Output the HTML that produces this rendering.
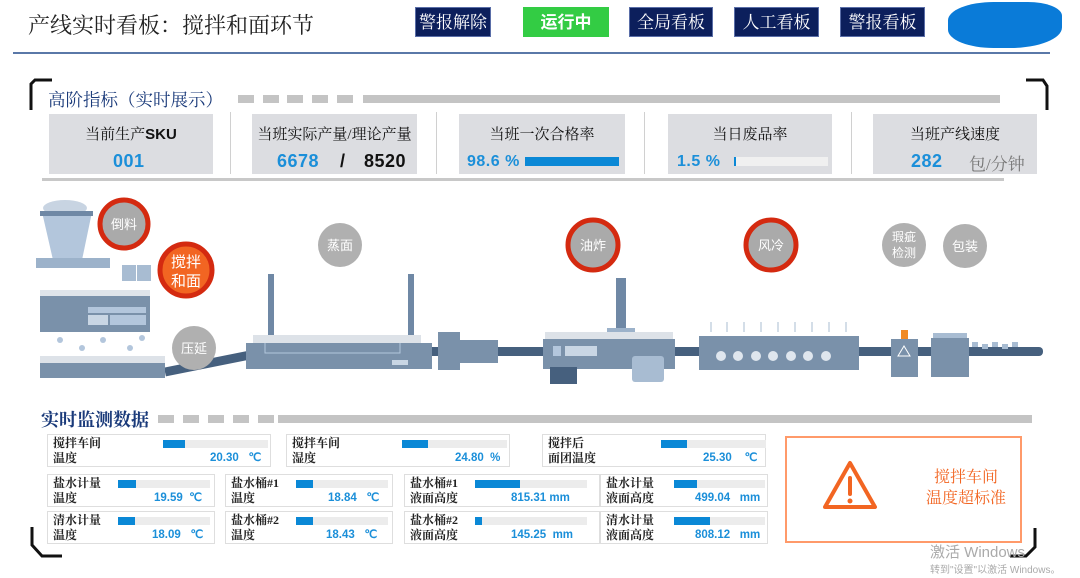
<!DOCTYPE html>
<html><head><meta charset="utf-8"><style>
*{margin:0;padding:0;box-sizing:border-box}
body{width:1080px;height:578px;background:#fff;position:relative;overflow:hidden;font-family:"Liberation Sans","Noto Sans CJK SC",sans-serif}
.a{position:absolute}
.serif{font-family:"Liberation Serif","Noto Serif CJK SC",serif}
.btn{position:absolute;top:7px;height:30px;background:#0c1f5c;color:#fff;font-size:17px;text-align:center;line-height:30px;font-family:"Liberation Serif","Noto Serif CJK SC",serif;border:1px solid #5a6ea8}
.card{position:absolute;top:114px;height:60px;background:#dcdde1}
.card .t{position:absolute;top:9px;width:100%;text-align:center;font-size:15px;color:#111;font-family:"Liberation Serif","Noto Serif CJK SC",serif;white-space:nowrap}
.card .v{position:absolute;top:37px;font-size:18px;font-weight:bold;color:#1b8fd9;letter-spacing:.5px;white-space:nowrap}
.sep{position:absolute;top:112px;width:1px;height:62px;background:#d0d0d0}
.dc{position:absolute;border:1.5px solid #dedede;background:#fff;font-family:"Liberation Serif","Noto Serif CJK SC",serif;font-size:12px;color:#222;font-weight:bold;white-space:nowrap}
.dc .l1{position:absolute;left:5px;top:1px;line-height:14px}
.dc .l2{position:absolute;left:5px;top:16px;line-height:14px}
.dc .bar{position:absolute;top:5px;height:8px;background:#ececec}
.dc .bar i{display:block;height:100%;background:#0a88d6}
.dc .val{position:absolute;top:16px;line-height:14px;color:#1b8fd9;font-family:"Liberation Sans",sans-serif;font-size:11.5px;white-space:nowrap}
.dash{position:absolute;height:8px;background:#c4c4c4}
</style></head><body>
<div class="a serif" style="left:28px;top:9px;font-size:22px;color:#222">产线实时看板：搅拌和面环节</div>
<div class="btn" style="left:415px;width:76px">警报解除</div>
<div class="btn" style="left:523px;width:86px;background:#33cc44;border-color:#33cc44;font-weight:bold;font-family:'Liberation Sans','Noto Sans CJK SC',sans-serif">运行中</div>
<div class="btn" style="left:629px;width:84px">全局看板</div>
<div class="btn" style="left:734px;width:85px">人工看板</div>
<div class="btn" style="left:840px;width:85px">警报看板</div>
<div class="a" style="left:948px;top:2px;width:114px;height:46px;background:#0a7bd8;border-radius:40% 30% 45% 40%"></div>
<div class="a" style="left:13px;top:52px;width:1037px;height:2px;background:#5a78a8"></div>

<svg class="a" style="left:0;top:0" width="1080" height="578">
<path d="M31 110 V84 L35 80 H52" fill="none" stroke="#111" stroke-width="3"/>
<path d="M1026 80 H1043 L1047 86 V110" fill="none" stroke="#111" stroke-width="3"/>
<path d="M32 527 V545 L42 556 H62" fill="none" stroke="#111" stroke-width="3"/>
<path d="M1035 528 V547 L1026 556 H1010" fill="none" stroke="#111" stroke-width="3"/>
</svg>

<div class="a serif" style="left:48px;top:87px;font-size:17.5px;color:#1a3a7a;white-space:nowrap">高阶指标（实时展示）</div>
<div class="dash" style="left:238px;top:95px;width:16px"></div>
<div class="dash" style="left:263px;top:95px;width:16px"></div>
<div class="dash" style="left:287px;top:95px;width:16px"></div>
<div class="dash" style="left:312px;top:95px;width:16px"></div>
<div class="dash" style="left:337px;top:95px;width:16px"></div>
<div class="dash" style="left:363px;top:95px;width:637px"></div>

<div class="card" style="left:49px;width:164px"><div class="t">当前生产<b style="font-family:'Liberation Sans'">SKU</b></div><div class="v" style="left:64px">001</div></div>
<div class="sep" style="left:230px"></div>
<div class="card" style="left:252px;width:165px"><div class="t">当班实际产量/理论产量</div><div class="v" style="left:25px">6678</div><div class="v" style="left:88px;color:#111">/</div><div class="v" style="left:112px;color:#111">8520</div></div>
<div class="sep" style="left:436px"></div>
<div class="card" style="left:459px;width:166px"><div class="t">当班一次合格率</div><div class="v" style="left:8px;font-size:16px;top:39px">98.6 %</div><div class="a" style="left:66px;top:43px;width:94px;height:9px;background:#0a88d6"></div></div>
<div class="sep" style="left:644px"></div>
<div class="card" style="left:668px;width:164px"><div class="t">当日废品率</div><div class="v" style="left:9px;font-size:16px;top:39px">1.5 %</div><div class="a" style="left:66px;top:43px;width:94px;height:9px;background:#f0f0f0;border-left:2px solid #0a88d6"></div></div>
<div class="sep" style="left:851px"></div>
<div class="card" style="left:873px;width:164px"><div class="t">当班产线速度</div><div class="v" style="left:38px">282</div><div class="a serif" style="left:96px;top:36px;font-size:17px;color:#777;white-space:nowrap">包/分钟</div></div>
<div class="a" style="left:42px;top:178px;width:962px;height:3px;background:#c8c8c8"></div>

<svg class="a" style="left:0;top:190px" width="1080" height="200" font-family="Liberation Sans,Noto Sans CJK SC,sans-serif">
<path d="M165 182 L250 165" stroke="#46607e" stroke-width="9"/>
<rect x="250" y="157" width="793" height="9" rx="4" fill="#46607e"/>
<g fill="#9fb3c8"><circle cx="940" cy="161" r="1"/></g>
<ellipse cx="65" cy="18" rx="22" ry="8" fill="#c8d4e2"/>
<path d="M42 22 H92 L82 70 H53 Z" fill="#b3c6dc"/>
<rect x="40" y="21" width="53" height="5" fill="#6f88a5"/>
<rect x="36" y="68" width="74" height="10" fill="#9cb2ca"/>
<rect x="122" y="75" width="14" height="16" fill="#a8bcd2"/><rect x="137" y="75" width="14" height="16" fill="#a8bcd2"/>
<rect x="40" y="102" width="110" height="40" fill="#7a91aa"/>
<rect x="40" y="100" width="110" height="6" fill="#dfe4ea"/>
<rect x="88" y="117" width="58" height="6" fill="#b3c6dc"/><rect x="88" y="125" width="20" height="10" fill="#c9d6e4"/><rect x="110" y="125" width="36" height="10" fill="#b3c6dc"/>
<rect x="40" y="172" width="125" height="16" fill="#7a91aa"/><rect x="40" y="166" width="125" height="7" fill="#dde2e8"/>
<g fill="#b3c6dc"><circle cx="60" cy="150" r="3"/><circle cx="82" cy="158" r="3"/><circle cx="103" cy="150" r="3"/><circle cx="130" cy="158" r="3"/><circle cx="142" cy="148" r="3"/></g>
<rect x="268" y="84" width="6" height="62" fill="#6f88a5"/><rect x="408" y="84" width="6" height="62" fill="#6f88a5"/>
<rect x="253" y="145" width="168" height="8" fill="#dde2e8"/>
<rect x="246" y="153" width="186" height="26" fill="#7a91aa"/>
<path d="M265 153 V163 H400 V153" fill="none" stroke="#b3c6dc" stroke-width="1"/>
<rect x="392" y="170" width="16" height="5" fill="#c9d6e4"/>
<rect x="438" y="142" width="22" height="38" fill="#7a91aa"/><rect x="460" y="150" width="38" height="23" fill="#7a91aa"/>
<rect x="616" y="88" width="10" height="53" fill="#6f88a5"/><rect x="607" y="138" width="28" height="5" fill="#9cb2ca"/>
<rect x="545" y="142" width="128" height="8" fill="#dde2e8"/>
<rect x="543" y="149" width="132" height="30" fill="#7a91aa"/>
<rect x="553" y="156" width="8" height="10" fill="#b3c6dc"/><rect x="565" y="156" width="32" height="10" fill="#c9d6e4"/>
<rect x="550" y="177" width="27" height="17" fill="#46607e"/>
<rect x="632" y="166" width="32" height="26" rx="3" fill="#a8bcd2"/>
<rect x="699" y="146" width="160" height="34" fill="#7a91aa"/>
<g stroke="#a8bcd2" stroke-width="1" fill="none"><path d="M711 132 v10 M727 132 v10 M744 132 v10 M761 132 v10 M778 132 v10 M795 132 v10 M812 132 v10 M829 132 v10 M846 132 v10"/></g>
<g fill="#dfe6ee"><circle cx="721" cy="166" r="5"/><circle cx="738" cy="166" r="5"/><circle cx="756" cy="166" r="5"/><circle cx="773" cy="166" r="5"/><circle cx="791" cy="166" r="5"/><circle cx="808" cy="166" r="5"/><circle cx="826" cy="166" r="5"/></g>
<rect x="891" y="149" width="27" height="38" fill="#7a91aa"/><rect x="901" y="140" width="7" height="9" fill="#f08a24"/>
<path d="M904 156 l6 10 h-12 z" fill="none" stroke="#fff" stroke-width="1"/>
<rect x="931" y="148" width="38" height="39" fill="#7a91aa"/><rect x="933" y="143" width="34" height="5" fill="#a8bcd2"/>
<g fill="#a8bcd2"><rect x="972" y="152" width="6" height="5"/><rect x="982" y="154" width="6" height="5"/><rect x="992" y="152" width="6" height="5"/><rect x="1002" y="154" width="6" height="5"/><rect x="1012" y="152" width="6" height="5"/></g>
<g font-size="13" fill="#fff" text-anchor="middle">
<circle cx="124" cy="34" r="24" fill="#aaa" stroke="#d42a10" stroke-width="5"/><text x="124" y="39">倒料</text>
<circle cx="186" cy="80" r="26" fill="#f26522" stroke="#d42a10" stroke-width="5"/><text x="186" y="77" font-size="15">搅拌</text><text x="186" y="96" font-size="15">和面</text>
<circle cx="194" cy="158" r="22" fill="#b0b0b0"/><text x="194" y="163">压延</text>
<circle cx="340" cy="55" r="22" fill="#b0b0b0"/><text x="340" y="60">蒸面</text>
<circle cx="593" cy="55" r="25" fill="#aaa" stroke="#d42a10" stroke-width="5"/><text x="593" y="60">油炸</text>
<circle cx="771" cy="55" r="25" fill="#aaa" stroke="#d42a10" stroke-width="5"/><text x="771" y="60">风冷</text>
<circle cx="904" cy="55" r="22" fill="#b0b0b0"/><text x="904" y="51" font-size="12">瑕疵</text><text x="904" y="67" font-size="12">检测</text>
<circle cx="965" cy="56" r="22" fill="#b0b0b0"/><text x="965" y="61">包装</text>
</g>
</svg>

<div class="a serif" style="left:41px;top:406px;font-size:18px;color:#1a3a7a;font-weight:bold;white-space:nowrap">实时监测数据</div>
<div class="dash" style="left:158px;top:415px;width:16px"></div>
<div class="dash" style="left:183px;top:415px;width:16px"></div>
<div class="dash" style="left:208px;top:415px;width:16px"></div>
<div class="dash" style="left:233px;top:415px;width:16px"></div>
<div class="dash" style="left:258px;top:415px;width:16px"></div>
<div class="dash" style="left:278px;top:415px;width:754px"></div>

<div class="dc" style="left:47px;top:434px;width:224px;height:33px"><div class="l1">搅拌车间</div><div class="l2">温度</div><div class="bar" style="left:115px;width:105px"><i style="width:21%"></i></div><div class="val" style="left:162px">20.30 &nbsp; ℃</div></div>
<div class="dc" style="left:286px;top:434px;width:224px;height:33px"><div class="l1">搅拌车间</div><div class="l2">湿度</div><div class="bar" style="left:115px;width:105px"><i style="width:25%"></i></div><div class="val" style="left:168px">24.80 &nbsp;%</div></div>
<div class="dc" style="left:542px;top:434px;width:224px;height:33px"><div class="l1">搅拌后</div><div class="l2">面团温度</div><div class="bar" style="left:118px;width:105px"><i style="width:25%"></i></div><div class="val" style="left:160px">25.30 &nbsp; &nbsp;℃</div></div>

<div class="dc" style="left:47px;top:474px;width:168px;height:33px"><div class="l1">盐水计量</div><div class="l2">温度</div><div class="bar" style="left:70px;width:92px"><i style="width:20%"></i></div><div class="val" style="left:106px">19.59 &nbsp;℃</div></div>
<div class="dc" style="left:225px;top:474px;width:168px;height:33px"><div class="l1">盐水桶#1</div><div class="l2">温度</div><div class="bar" style="left:70px;width:92px"><i style="width:19%"></i></div><div class="val" style="left:102px">18.84 &nbsp; ℃</div></div>
<div class="dc" style="left:404px;top:474px;width:196px;height:33px"><div class="l1">盐水桶#1</div><div class="l2">液面高度</div><div class="bar" style="left:70px;width:112px"><i style="width:40%"></i></div><div class="val" style="left:106px">815.31 mm</div></div>
<div class="dc" style="left:600px;top:474px;width:168px;height:33px"><div class="l1">盐水计量</div><div class="l2">液面高度</div><div class="bar" style="left:73px;width:91px"><i style="width:25%"></i></div><div class="val" style="left:94px">499.04 &nbsp; mm</div></div>

<div class="dc" style="left:47px;top:511px;width:168px;height:33px"><div class="l1">清水计量</div><div class="l2">温度</div><div class="bar" style="left:70px;width:92px"><i style="width:19%"></i></div><div class="val" style="left:104px">18.09 &nbsp; ℃</div></div>
<div class="dc" style="left:225px;top:511px;width:168px;height:33px"><div class="l1">盐水桶#2</div><div class="l2">温度</div><div class="bar" style="left:70px;width:92px"><i style="width:19%"></i></div><div class="val" style="left:100px">18.43 &nbsp; ℃</div></div>
<div class="dc" style="left:404px;top:511px;width:196px;height:33px"><div class="l1">盐水桶#2</div><div class="l2">液面高度</div><div class="bar" style="left:70px;width:112px"><i style="width:6%"></i></div><div class="val" style="left:106px">145.25 &nbsp;mm</div></div>
<div class="dc" style="left:600px;top:511px;width:168px;height:33px"><div class="l1">清水计量</div><div class="l2">液面高度</div><div class="bar" style="left:73px;width:91px"><i style="width:40%"></i></div><div class="val" style="left:94px">808.12 &nbsp; mm</div></div>

<div class="a" style="left:785px;top:436px;width:237px;height:107px;border:2px solid #ff9a6a"></div>
<svg class="a" style="left:820px;top:458px" width="60" height="54"><path d="M30 5 L55 49 H5 Z" fill="none" stroke="#f26522" stroke-width="4" stroke-linejoin="round"/><path d="M30 20 V36" stroke="#f26522" stroke-width="4" stroke-linecap="round"/><circle cx="30" cy="43" r="2.5" fill="#f26522"/></svg>
<div class="a serif" style="left:906px;top:467px;width:120px;text-align:center;font-size:16px;color:#f26522;line-height:21px">搅拌车间<br>温度超标准</div>
<div class="a" style="left:930px;top:541px;font-size:15px;color:#aaa;white-space:nowrap">激活 Windows</div>
<div class="a" style="left:930px;top:561px;font-size:10px;color:#aaa;white-space:nowrap">转到"设置"以激活 Windows。</div>
</body></html>
